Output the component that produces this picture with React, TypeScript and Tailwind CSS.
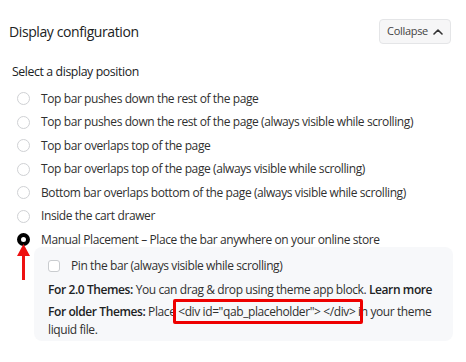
import React from "react";

const options = [
  "Top bar pushes down the rest of the page",
  "Top bar pushes down the rest of the page (always visible while scrolling)",
  "Top bar overlaps top of the page",
  "Top bar overlaps top of the page (always visible while scrolling)",
  "Bottom bar overlaps bottom of the page (always visible while scrolling)",
  "Inside the cart drawer",
];

export default function App() {
  return (
    <div
      className="w-[466px] h-[362px] bg-white text-[#303030] overflow-hidden relative"
      style={{ fontFamily: '"Open Sans", "Noto Sans", sans-serif' }}
    >
      <div className="flex items-center justify-between pl-[9px] pr-[15px] pt-[19px]">
        <div className="text-[14px] leading-[24px] text-[#202223] tracking-[-0.4px]">Display configuration</div>
        <button className="h-[25px] w-[72px] flex items-center justify-center gap-[5px] rounded-[4px] border border-[#e4e5e7] bg-[#f6f6f7] text-[11px] text-[#444] tracking-[-0.3px]">
          <span>Collapse</span>
          <svg width="10" height="7" viewBox="0 0 10 7" fill="none" className="shrink-0">
            <path d="M1 6 L5 2 L9 6" stroke="#333" strokeWidth="1.6" strokeLinecap="round" strokeLinejoin="round" />
          </svg>
        </button>
      </div>

      <div className="pl-[12px] mt-[18px] text-[12.3px] leading-[20px] text-[#202223] tracking-[-0.4px]">
        Select a display position
      </div>

      <div className="mt-[5px] flex flex-col">
        {options.map((o) => (
          <div key={o} className="h-[23.5px] flex items-center pl-[17px] gap-[11px]">
            <span className="w-[13px] h-[13px] rounded-full border border-[#cfd1d4] bg-white shrink-0" />
            <span className="text-[12px] text-[#303030] tracking-[-0.4px] whitespace-nowrap">{o}</span>
          </div>
        ))}
        <div className="h-[23.5px] flex items-center pl-[17px] gap-[11px]">
          <span className="w-[13px] h-[13px] rounded-full border-[4px] border-black bg-white shrink-0" />
          <span className="text-[12px] text-[#303030] tracking-[-0.4px] whitespace-nowrap">
            Manual Placement – Place the bar anywhere on your online store
          </span>
        </div>
      </div>

      <div className="ml-[34px] mr-[13px] mt-[-4.5px] rounded-[8px] bg-[#f7f8fa] pl-[14px] pr-[10px] pt-[9px] pb-[2px] text-[12px] tracking-[-0.4px]">
        <div className="flex items-center gap-[11px] h-[20px]">
          <span className="w-[12px] h-[12px] rounded-[3px] border border-[#c9cccf] bg-white shrink-0" />
          <span>Pin the bar (always visible while scrolling)</span>
        </div>
        <div className="mt-[5px] leading-[18px] whitespace-nowrap">
          <b className="font-semibold text-[#202223]">For 2.0 Themes:</b> You can drag &amp; drop using theme app block.{" "}
          <b className="font-semibold text-[#202223]">Learn more</b>
        </div>
        <div className="mt-[4px] leading-[18px]">
          <b className="font-semibold text-[#202223]">For older Themes:</b> Place{" "}
          <span className="relative">
            &lt;div id="qab_placeholder"&gt; &lt;/div&gt;
            <span className="absolute left-[-5px] right-[-8px] top-[-4px] bottom-[-4px] border-[3px] border-[#ee0000] rounded-[2px]" />
          </span>{" "}
          in your theme liquid file.
        </div>
      </div>

      <svg className="absolute left-[17px] top-[244px]" width="13" height="36" viewBox="0 0 13 36">
        <path d="M6.5 0 L13 12 L8 12 L8 36 L5 36 L5 12 L0 12 Z" fill="#ee1111" />
      </svg>
    </div>
  );
}
